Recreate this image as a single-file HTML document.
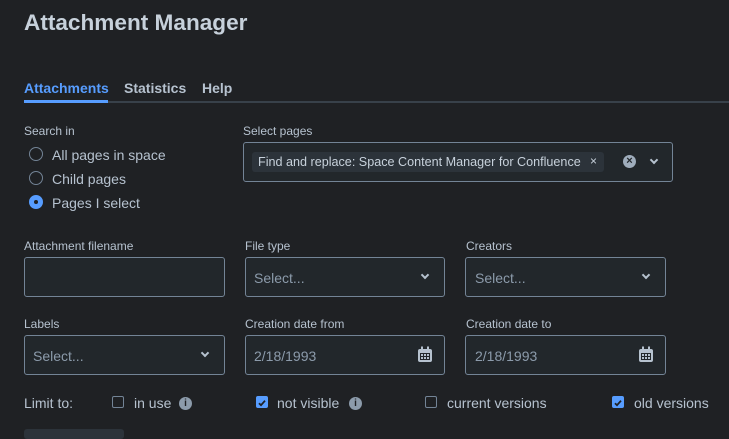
<!DOCTYPE html>
<html><head><style>
*{box-sizing:border-box;margin:0;padding:0}
body{width:729px;height:433px;overflow:hidden;background:#1f2124;font-family:"Liberation Sans",Arial,sans-serif;color:#b6c2cf;position:relative}
.a{position:absolute;white-space:nowrap}
.lbl{font-size:12px;color:#b6c2cf}
.box{position:absolute;border:1px solid #738496;border-radius:3px;background:#22272b}
.ph{position:absolute;font-size:14px;color:#8c9bab}
.chev{position:absolute;width:6px;height:6px;border-right:2px solid #b6c2cf;border-bottom:2px solid #b6c2cf;transform:rotate(45deg)}
.radio{position:absolute;width:14px;height:14px;border:1px solid #738496;border-radius:50%}
.cb{position:absolute;width:12px;height:12px;border:1.5px solid #738496;border-radius:2px}
.cbon{position:absolute;width:12px;height:12px;border-radius:2px;background:#579dff}
.txt{font-size:14px;color:#b6c2cf}
.info{position:absolute;width:13px;height:13px;border-radius:50%;background:#8c9bab;color:#1f2124;font-size:10px;font-weight:bold;text-align:center;line-height:13px}
</style></head><body>
<div class="a" style="left:24px;top:10px;font-size:22.6px;font-weight:bold;color:#c7d1db">Attachment Manager</div>

<div class="a" style="left:24px;top:80px;font-size:14px;color:#579dff;font-weight:bold">Attachments</div>
<div class="a" style="left:124px;top:80px;font-size:14px;color:#b6c2cf;font-weight:bold">Statistics</div>
<div class="a" style="left:202px;top:80px;font-size:14px;color:#b6c2cf;font-weight:bold">Help</div>
<div class="a" style="left:24px;top:101px;width:705px;height:2px;background:#38414a"></div>
<div class="a" style="left:24px;top:100px;width:84px;height:3px;background:#579dff"></div>

<div class="a lbl" style="left:24px;top:124px">Search in</div>
<div class="radio" style="left:29px;top:147px"></div>
<div class="a txt" style="left:52px;top:147px">All pages in space</div>
<div class="radio" style="left:29px;top:171px"></div>
<div class="a txt" style="left:52px;top:171px">Child pages</div>
<div class="radio" style="left:29px;top:195px;background:#579dff;border-color:#579dff"><div style="position:absolute;left:4px;top:4px;width:4px;height:4px;border-radius:50%;background:#1f2124"></div></div>
<div class="a txt" style="left:52px;top:195px">Pages I select</div>

<div class="a lbl" style="left:243px;top:124px">Select pages</div>
<div class="box" style="left:243px;top:142px;width:430px;height:40px"></div>
<div class="a" style="left:252px;top:152px;width:352px;height:20px;background:#2c333a;border-radius:3px"></div>
<div class="a" style="left:258px;top:155px;font-size:12.6px;color:#c7d1db">Find and replace: Space Content Manager for Confluence</div>
<div class="a" style="left:590px;top:154px;font-size:12px;color:#c7d1db">×</div>
<div class="a" style="left:623px;top:155px;width:13px;height:13px;border-radius:50%;background:#9fadbc;color:#22272b;font-size:11px;line-height:13px;text-align:center;font-weight:bold">×</div>
<div class="chev" style="left:651px;top:157px"></div>

<div class="a lbl" style="left:24px;top:239px">Attachment filename</div>
<div class="box" style="left:24px;top:257px;width:201px;height:40px"></div>
<div class="a lbl" style="left:245px;top:239px">File type</div>
<div class="box" style="left:245px;top:257px;width:200px;height:40px"></div>
<div class="ph" style="left:254px;top:270px">Select...</div>
<div class="chev" style="left:422px;top:272px"></div>
<div class="a lbl" style="left:466px;top:239px">Creators</div>
<div class="box" style="left:465px;top:257px;width:201px;height:40px"></div>
<div class="ph" style="left:475px;top:270px">Select...</div>
<div class="chev" style="left:643px;top:272px"></div>

<div class="a lbl" style="left:24px;top:317px">Labels</div>
<div class="box" style="left:24px;top:335px;width:201px;height:40px"></div>
<div class="ph" style="left:33px;top:348px">Select...</div>
<div class="chev" style="left:202px;top:350px"></div>
<div class="a lbl" style="left:245px;top:317px">Creation date from</div>
<div class="box" style="left:245px;top:335px;width:200px;height:40px"></div>
<div class="ph" style="left:254px;top:348px">2/18/1993</div>
<svg class="a" style="left:417px;top:346px" width="16" height="17" viewBox="0 0 16 17"><rect x="1" y="3" width="14" height="13" rx="2" fill="#b6c2cf"/><rect x="3" y="7" width="10" height="7" fill="#22272b"/><rect x="4" y="0.5" width="2" height="4" fill="#b6c2cf"/><rect x="10" y="0.5" width="2" height="4" fill="#b6c2cf"/><g fill="#b6c2cf"><rect x="4" y="8" width="2" height="2"/><rect x="7" y="8" width="2" height="2"/><rect x="10" y="8" width="2" height="2"/><rect x="4" y="11" width="2" height="2"/><rect x="7" y="11" width="2" height="2"/><rect x="10" y="11" width="2" height="2"/></g></svg>
<div class="a lbl" style="left:466px;top:317px">Creation date to</div>
<div class="box" style="left:465px;top:335px;width:201px;height:40px"></div>
<div class="ph" style="left:475px;top:348px">2/18/1993</div>
<svg class="a" style="left:638px;top:346px" width="16" height="17" viewBox="0 0 16 17"><rect x="1" y="3" width="14" height="13" rx="2" fill="#b6c2cf"/><rect x="3" y="7" width="10" height="7" fill="#22272b"/><rect x="4" y="0.5" width="2" height="4" fill="#b6c2cf"/><rect x="10" y="0.5" width="2" height="4" fill="#b6c2cf"/><g fill="#b6c2cf"><rect x="4" y="8" width="2" height="2"/><rect x="7" y="8" width="2" height="2"/><rect x="10" y="8" width="2" height="2"/><rect x="4" y="11" width="2" height="2"/><rect x="7" y="11" width="2" height="2"/><rect x="10" y="11" width="2" height="2"/></g></svg>

<div class="a txt" style="left:24px;top:395px">Limit to:</div>
<div class="cb" style="left:112px;top:396px"></div>
<div class="a txt" style="left:134px;top:395px">in use</div>
<div class="info" style="left:179px;top:397px">i</div>
<div class="cbon" style="left:256px;top:396px"><svg width="12" height="12" viewBox="0 0 12 12"><path d="M3 6.2l2 2 4-4.5" stroke="#1f2124" stroke-width="1.8" fill="none"/></svg></div>
<div class="a txt" style="left:277px;top:395px">not visible</div>
<div class="info" style="left:349px;top:397px">i</div>
<div class="cb" style="left:425px;top:396px"></div>
<div class="a txt" style="left:447px;top:395px">current versions</div>
<div class="cbon" style="left:612px;top:396px"><svg width="12" height="12" viewBox="0 0 12 12"><path d="M3 6.2l2 2 4-4.5" stroke="#1f2124" stroke-width="1.8" fill="none"/></svg></div>
<div class="a txt" style="left:634px;top:395px">old versions</div>

<div class="a" style="left:24px;top:429px;width:100px;height:10px;background:#2c333a;border-radius:3px"></div>
</body></html>
